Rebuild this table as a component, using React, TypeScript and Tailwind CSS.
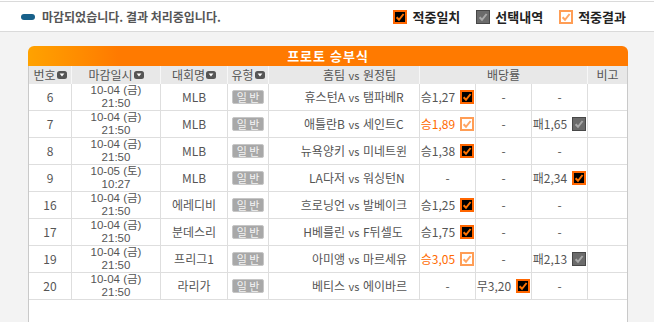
import React from 'react';

type Mark = 'match' | 'select' | 'result';

interface Odd {
  label: string;
  mark?: Mark;
}

interface Row {
  no: number;
  date: string;
  time: string;
  league: string;
  home: string;
  away: string;
  odds: (Odd | null)[];
}

const rows: Row[] = [
  { no: 6, date: '10-04 (금)', time: '21:50', league: 'MLB', home: '휴스턴A', away: '탬파베R', odds: [{ label: '승1,27', mark: 'match' }, null, null] },
  { no: 7, date: '10-04 (금)', time: '21:50', league: 'MLB', home: '애틀란B', away: '세인트C', odds: [{ label: '승1,89', mark: 'result' }, null, { label: '패1,65', mark: 'select' }] },
  { no: 8, date: '10-04 (금)', time: '21:50', league: 'MLB', home: '뉴욕양키', away: '미네트윈', odds: [{ label: '승1,38', mark: 'match' }, null, null] },
  { no: 9, date: '10-05 (토)', time: '10:27', league: 'MLB', home: 'LA다저', away: '워싱턴N', odds: [null, null, { label: '패2,34', mark: 'match' }] },
  { no: 16, date: '10-04 (금)', time: '21:50', league: '에레디비', home: '흐로닝언', away: '발베이크', odds: [{ label: '승1,25', mark: 'match' }, null, null] },
  { no: 17, date: '10-04 (금)', time: '21:50', league: '분데스리', home: 'H베를린', away: 'F뒤셀도', odds: [{ label: '승1,75', mark: 'match' }, null, null] },
  { no: 19, date: '10-04 (금)', time: '21:50', league: '프리그1', home: '아미앵', away: '마르세유', odds: [{ label: '승3,05', mark: 'result' }, null, { label: '패2,13', mark: 'select' }] },
  { no: 20, date: '10-04 (금)', time: '21:50', league: '라리가', home: '베티스', away: '에이바르', odds: [null, { label: '무3,20', mark: 'match' }, null] },
];

const grid = 'grid grid-cols-[43px_89px_67px_41px_151px_56px_56px_56px_39px]';

function CheckMark({ type }: { type: Mark }) {
  const c = {
    match: { outer: '#ff6600', inner: '#000000', check: '#ff7200', pad: 2 },
    select: { outer: '#474747', inner: '#6b6b6b', check: '#a9a9a9', pad: 1 },
    result: { outer: '#ff9d55', inner: '#ffffff', check: '#ffa665', pad: 2 },
  }[type];
  return (
    <svg width="14" height="14" viewBox="0 0 14 14" className="shrink-0">
      <rect width="14" height="14" fill={c.outer} />
      <rect x={c.pad} y={c.pad} width={14 - c.pad * 2} height={14 - c.pad * 2} fill={c.inner} />
      <path d="M3.6 7.2 L6 9.8 L10.6 4" stroke={c.check} strokeWidth="2" fill="none" />
    </svg>
  );
}

function SortIcon() {
  return (
    <svg width="10" height="8" viewBox="0 0 10 8" className="ml-px shrink-0">
      <rect width="10" height="8" rx="2.5" fill="#555555" />
      <path d="M2.6 2.6 H7.4 L5 5.6 Z" fill="#ffffff" />
    </svg>
  );
}

function HeadCell({ children, sort, className = '' }: { children: React.ReactNode; sort?: boolean; className?: string }) {
  return (
    <div className={`flex items-center justify-center border-r border-[#f7f7f7] ${className}`}>
      <span>{children}</span>
      {sort && <SortIcon />}
    </div>
  );
}

function OddCell({ odd }: { odd: Odd | null }) {
  return (
    <div className="flex items-center justify-center gap-[5px] border-r border-[#dedede]">
      {odd ? (
        <>
          <span className={odd.mark === 'result' ? 'text-[#ff6a00]' : ''}>{odd.label}</span>
          {odd.mark && <CheckMark type={odd.mark} />}
        </>
      ) : (
        <span>-</span>
      )}
    </div>
  );
}

export default function App() {
  return (
    <div
      className="h-[322px] bg-[#f3f3f3] text-[#555] overflow-hidden"
      style={{ fontFamily: '"Noto Sans CJK KR", "Noto Sans", sans-serif' }}
    >
      <div className="bg-white pt-px">
        <div className="flex h-[31px] items-center border-y border-[#dadada] pl-[21px] pr-[28px]">
          <span className="h-[6px] w-[14px] rounded-full bg-[#17608a]" />
          <span className="ml-[7px] text-[12px] font-bold text-[#555]">
            마감되었습니다. 결과 처리중입니다.
          </span>
          <div className="ml-auto flex items-center gap-[16px] text-[13px] font-bold text-[#222]">
            <span className="flex items-center gap-[5px]">
              <CheckMark type="match" />
              적중일치
            </span>
            <span className="flex items-center gap-[5px]">
              <CheckMark type="select" />
              선택내역
            </span>
            <span className="flex items-center gap-[5px]">
              <CheckMark type="result" />
              적중결과
            </span>
          </div>
        </div>
      </div>

      <div className="ml-[28px] mt-[14px] w-[600px]">
        <div className="flex h-[20px] items-center justify-center rounded-t-[6px] bg-linear-to-r from-[#ffa200] to-[#ff7a00] to-15% text-[13px] font-bold tracking-[1px] text-white">
          프로토 승부식
        </div>
        <div className="border-x border-[#c9c9c9] bg-white pb-[23px] text-[12px]">
          <div className={`${grid} h-[18px] bg-[#e8e8e8] leading-none`}>
            <HeadCell sort>번호</HeadCell>
            <HeadCell sort>마감일시</HeadCell>
            <HeadCell sort>대회명</HeadCell>
            <HeadCell sort>유형</HeadCell>
            <div className="flex items-center border-r border-[#f7f7f7]">
              <span className="w-[76px] text-right">홈팀</span>
              <span className="w-[18px] text-center text-[11px]">vs</span>
              <span>원정팀</span>
            </div>
            <HeadCell className="col-span-3">배당률</HeadCell>
            <div className="flex items-center justify-center">비고</div>
          </div>

          {rows.map((r) => (
            <div key={r.no} className={`${grid} h-[27px] border-b border-[#dedede]`}>
              <div className="flex items-center justify-center border-r border-[#dedede]">{r.no}</div>
              <div
                className="flex flex-col items-center justify-center border-r border-[#dedede] text-[11.5px] leading-[13px]"
                style={{ fontFamily: '"Liberation Sans", "Noto Sans CJK KR", sans-serif' }}
              >
                <span>{r.date}</span>
                <span>{r.time}</span>
              </div>
              <div className="flex items-center justify-center border-r border-[#dedede]">{r.league}</div>
              <div className="flex items-center justify-center border-r border-[#dedede]">
                <span className="flex h-[14px] w-[32px] items-center justify-center whitespace-pre rounded-[2px] border border-[#c6c6c6] bg-[#a8a8a8] text-[11px] leading-none text-[#f4f4f4]">
                  일 반
                </span>
              </div>
              <div className="flex items-center border-r border-[#dedede]">
                <span className="w-[76px] text-right">{r.home}</span>
                <span className="w-[18px] text-center text-[11px]">vs</span>
                <span>{r.away}</span>
              </div>
              {r.odds.map((o, i) => (
                <OddCell key={i} odd={o} />
              ))}
              <div />
            </div>
          ))}
        </div>
      </div>
    </div>
  );
}
